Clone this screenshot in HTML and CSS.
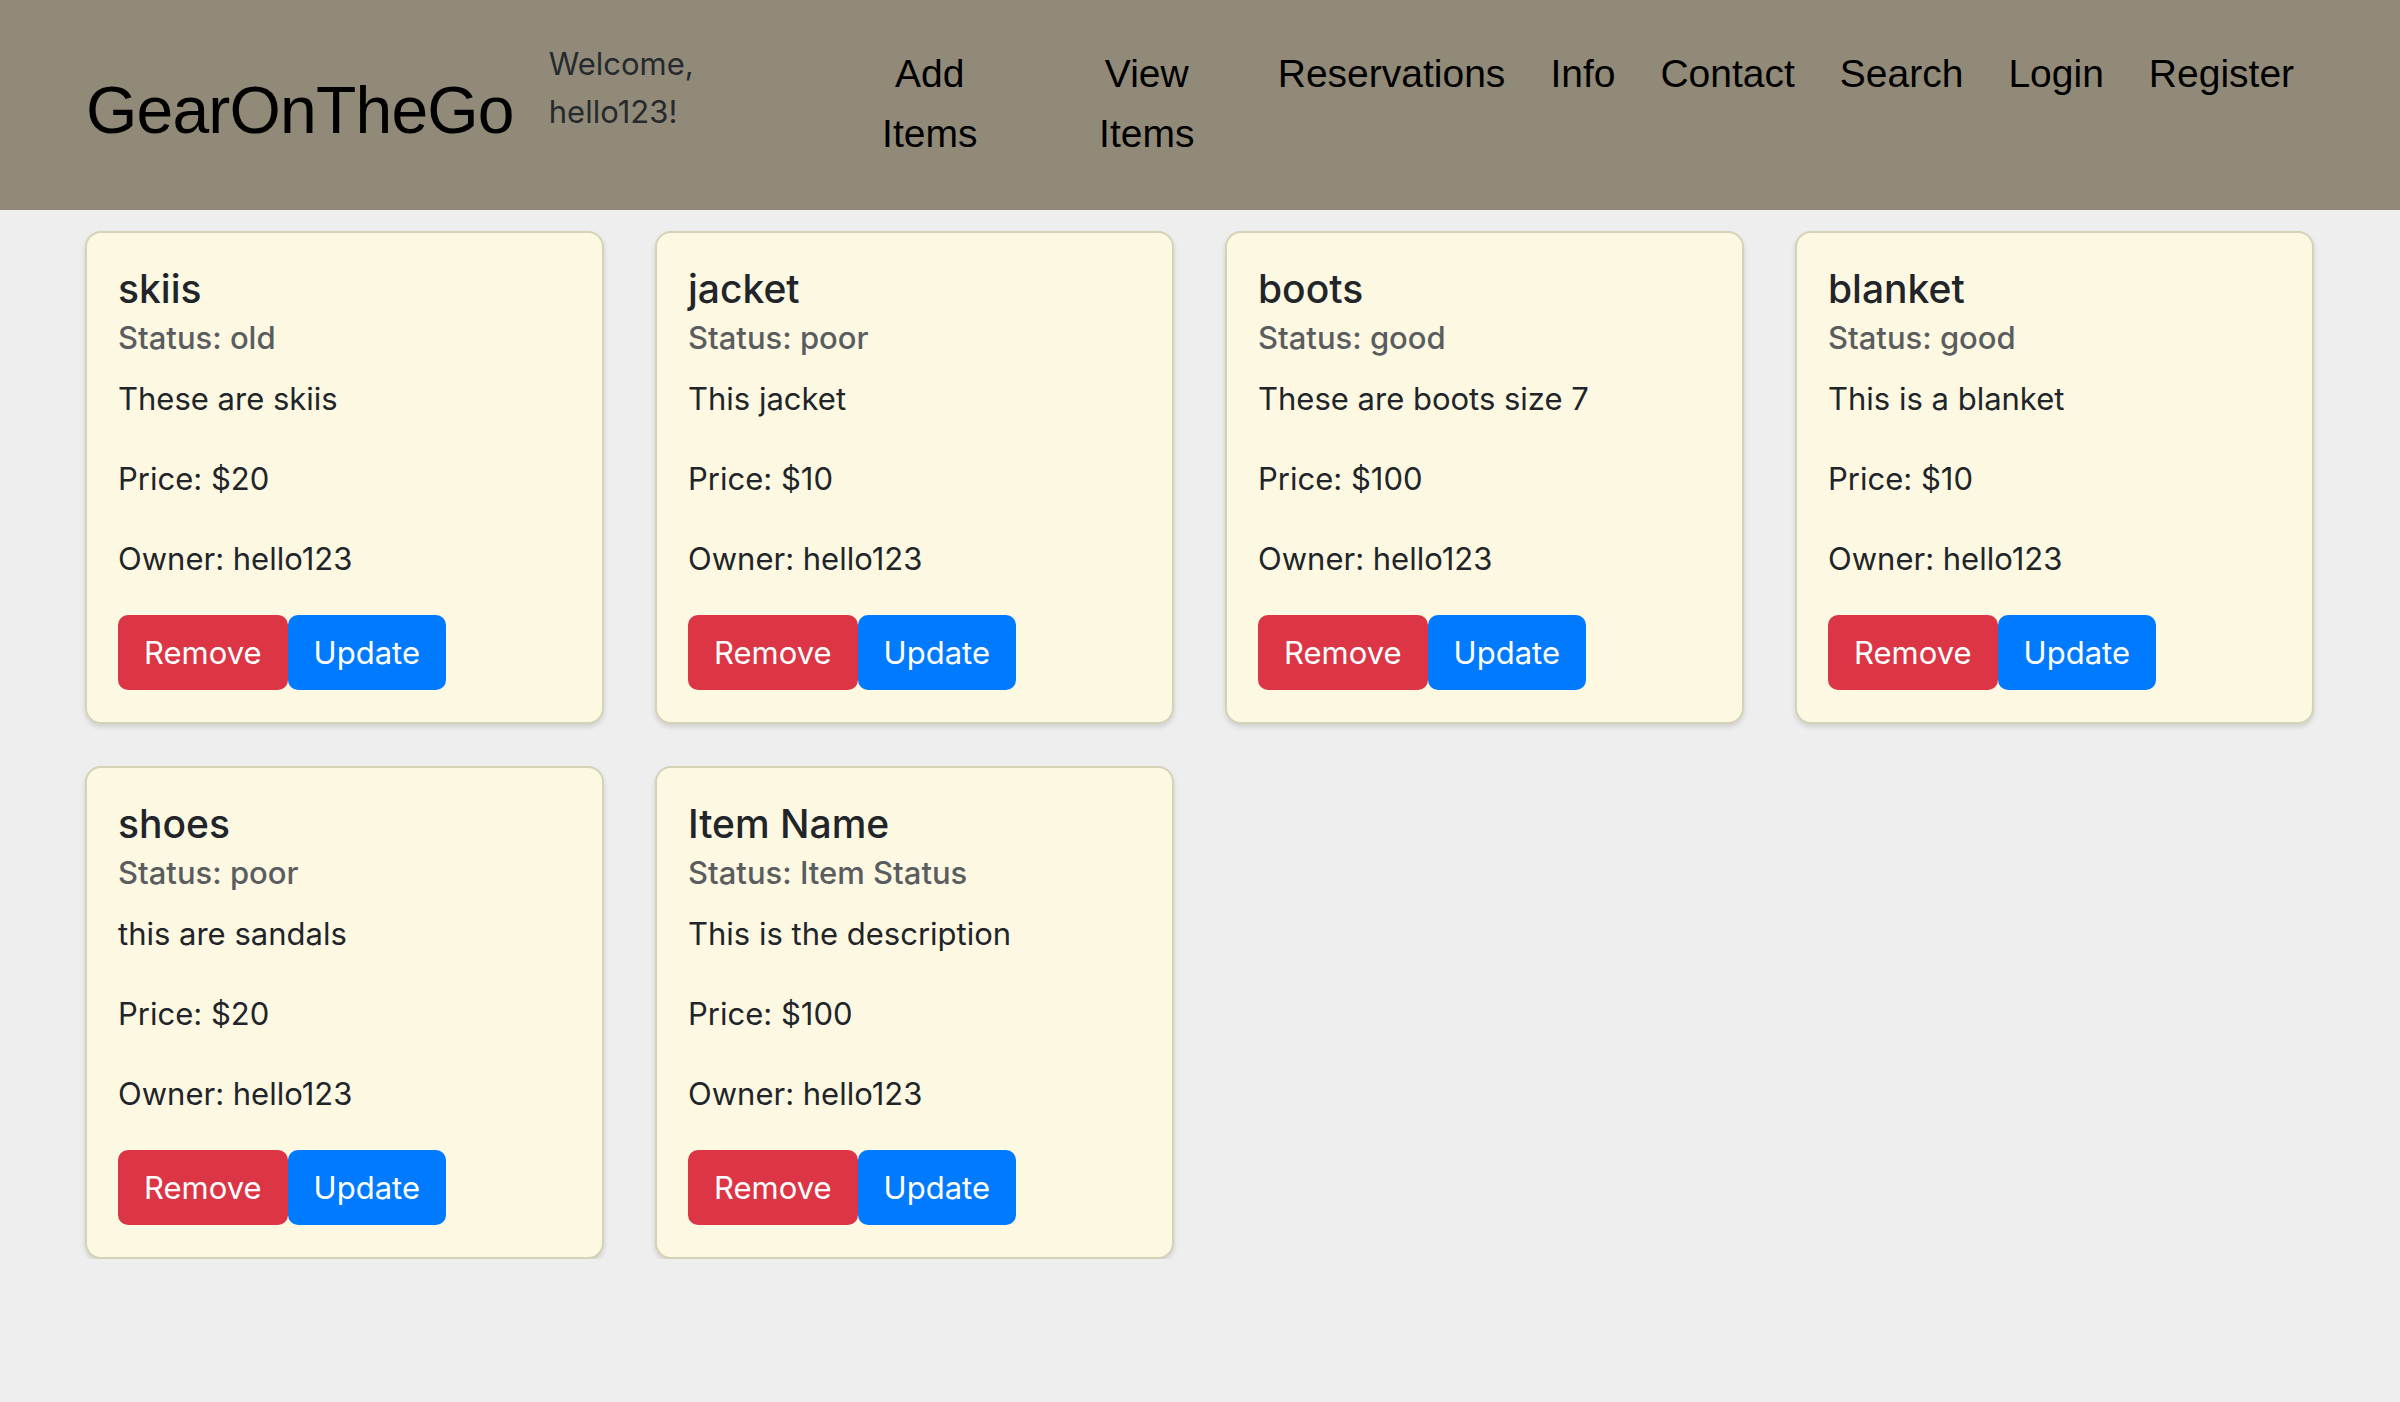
FILE: index.html
```html
<!DOCTYPE html>
<html lang="en">
<head>
<meta charset="utf-8">
<title>GearOnTheGo</title>
<link rel="stylesheet" href="styles.css">
</head>
<body>
<header class="topbar">
  <div class="brand">GearOnTheGo</div>
  <div class="welcome">Welcome,<br>hello123!</div>
  <nav class="nav">
    <a class="nav-link narrow">Add Items</a>
    <a class="nav-link narrow">View Items</a>
    <a class="nav-link">Reservations</a>
    <a class="nav-link">Info</a>
    <a class="nav-link">Contact</a>
    <a class="nav-link">Search</a>
    <a class="nav-link">Login</a>
    <a class="nav-link">Register</a>
  </nav>
</header>
<main class="grid">
  <div class="card">
    <h5 class="card-title">skiis</h5>
    <h6 class="card-subtitle">Status: old</h6>
    <p class="card-text first">These are skiis</p>
    <p class="card-text">Price: $20</p>
    <p class="card-text">Owner: hello123</p>
    <div class="actions"><button class="btn danger">Remove</button><button class="btn primary">Update</button></div>
  </div>
  <div class="card">
    <h5 class="card-title">jacket</h5>
    <h6 class="card-subtitle">Status: poor</h6>
    <p class="card-text first">This jacket</p>
    <p class="card-text">Price: $10</p>
    <p class="card-text">Owner: hello123</p>
    <div class="actions"><button class="btn danger">Remove</button><button class="btn primary">Update</button></div>
  </div>
  <div class="card">
    <h5 class="card-title">boots</h5>
    <h6 class="card-subtitle">Status: good</h6>
    <p class="card-text first">These are boots size 7</p>
    <p class="card-text">Price: $100</p>
    <p class="card-text">Owner: hello123</p>
    <div class="actions"><button class="btn danger">Remove</button><button class="btn primary">Update</button></div>
  </div>
  <div class="card">
    <h5 class="card-title">blanket</h5>
    <h6 class="card-subtitle">Status: good</h6>
    <p class="card-text first">This is a blanket</p>
    <p class="card-text">Price: $10</p>
    <p class="card-text">Owner: hello123</p>
    <div class="actions"><button class="btn danger">Remove</button><button class="btn primary">Update</button></div>
  </div>
  <div class="card">
    <h5 class="card-title">shoes</h5>
    <h6 class="card-subtitle">Status: poor</h6>
    <p class="card-text first">this are sandals</p>
    <p class="card-text">Price: $20</p>
    <p class="card-text">Owner: hello123</p>
    <div class="actions"><button class="btn danger">Remove</button><button class="btn primary">Update</button></div>
  </div>
  <div class="card">
    <h5 class="card-title">Item Name</h5>
    <h6 class="card-subtitle">Status: Item Status</h6>
    <p class="card-text first">This is the description</p>
    <p class="card-text">Price: $100</p>
    <p class="card-text">Owner: hello123</p>
    <div class="actions"><button class="btn danger">Remove</button><button class="btn primary">Update</button></div>
  </div>
</main>
</body>
</html>
```

FILE: styles.css
```css
html, body {
  margin: 0;
  padding: 0;
}
body {
  background: #eeeeee;
  font-family: Inter, "Open Sans", "Liberation Sans", sans-serif;
  color: #212529;
}
.topbar {
  height: 210px;
  background: #918a78;
  display: flex;
  align-items: flex-start;
  padding-left: 86px;
  box-sizing: border-box;
}
.brand {
  font-family: "Liberation Sans", Arial, sans-serif;
  font-size: 66px;
  line-height: 82px;
  letter-spacing: -0.8px;
  color: #000;
  margin-top: 69px;
  white-space: nowrap;
}
.welcome {
  font-size: 31px;
  line-height: 48px;
  color: #262a2e;
  margin-top: 40px;
  margin-left: 35px;
  white-space: nowrap;
}
.nav {
  display: flex;
  align-items: flex-start;
  gap: 45px;
  margin-top: 44px;
  margin-left: 150px;
}
.nav-link {
  font-family: "Liberation Sans", Arial, sans-serif;
  font-size: 39px;
  line-height: 60px;
  color: #000;
  white-space: nowrap;
}
.nav-link.narrow {
  width: 172px;
  white-space: normal;
  text-align: center;
}
.grid {
  display: grid;
  grid-template-columns: repeat(4, 519px);
  column-gap: 51px;
  row-gap: 42px;
  padding: 21px 0 0 85px;
}
.card {
  box-sizing: border-box;
  background: #fdf8e2;
  border: 2px solid #d6d2b6;
  border-radius: 16px;
  padding: 32px 32px 32px 31px;
  box-shadow: 0 3px 5px rgba(0, 0, 0, 0.13);
}
.card-title {
  margin: 0;
  font-size: 39px;
  line-height: 48px;
  font-weight: 500;
  color: #212529;
}
.card-subtitle {
  margin: 6px 0 0;
  font-size: 31px;
  line-height: 38px;
  font-weight: 500;
  color: #5a5d5f;
}
.card-text {
  margin: 0 0 32px;
  font-size: 31px;
  line-height: 48px;
}
.card-text.first {
  margin-top: 18px;
}
.actions {
  display: flex;
}
.btn {
  font-family: Inter, "Open Sans", sans-serif;
  font-size: 31px;
  line-height: 47px;
  padding: 12px 24px;
  border: 2px solid transparent;
  border-radius: 10px;
  color: #fff;
  margin: 0;
}
.btn.danger {
  background: #dc3545;
  border-color: #dc3545;
}
.btn.primary {
  background: #007bff;
  border-color: #007bff;
}
```
